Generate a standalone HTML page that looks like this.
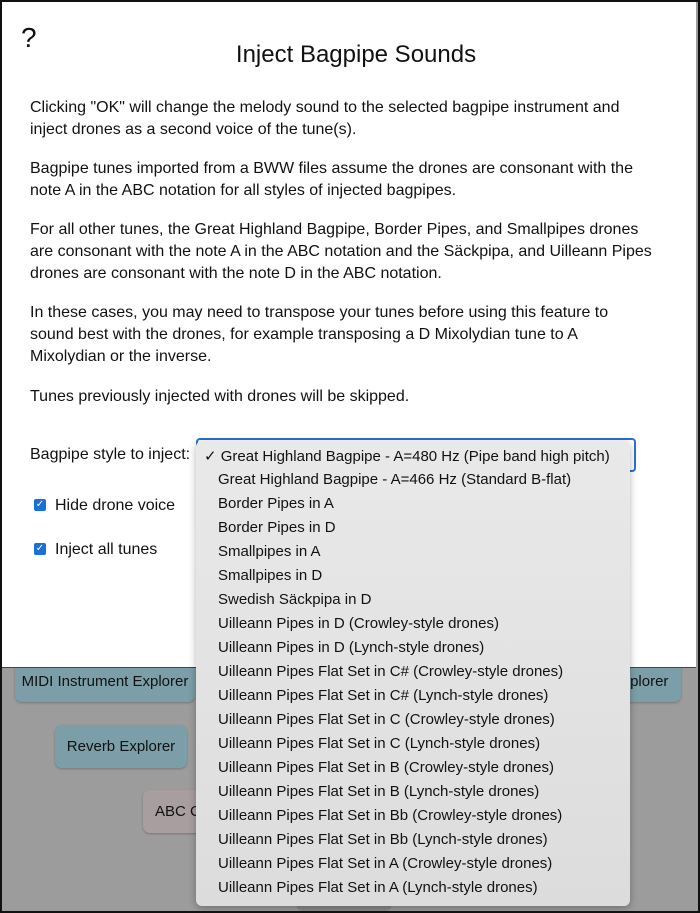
<!DOCTYPE html>
<html style="overflow:hidden"><head><style>
html,body{margin:0;padding:0;width:700px;height:913px;overflow:hidden}
body{position:relative;background:#9c9c9c;font-family:"Liberation Sans",Arial,sans-serif;}
.frame{position:absolute;left:0;top:0;width:696px;height:909px;border:2px solid #111;pointer-events:none;z-index:20}
.btn{position:absolute;border-radius:7px;font-size:15px;color:#111;display:flex;align-items:center;justify-content:center;box-shadow:0 1px 2px rgba(0,0,0,.25)}
.blue{background:#7c9ea9}
.pink{background:#a99e9f}
.dlg{position:absolute;left:0;top:0;width:696px;height:667px;background:#fff;border-bottom:1px solid #444;z-index:5}
.q{position:absolute;left:21px;top:22px;font-size:28px;color:#111}
h1{position:absolute;left:0;width:712px;top:41px;margin:0;text-align:center;font-weight:normal;font-size:24px;color:#111}
p{position:absolute;left:30px;margin:0;font-size:16px;line-height:22px;color:#111;width:680px;white-space:nowrap}
.lbl{position:absolute;font-size:16px;color:#111}
.cb{position:absolute;width:12px;height:12px;background:#1a6fd8;border-radius:2px;color:#fff;font-size:10px;line-height:12px;text-align:center}
.sel{position:absolute;left:196px;top:438px;width:436px;height:30px;border:2px solid #2b6fd6;border-radius:4px;z-index:6}
.dd{position:absolute;left:196px;top:441px;width:434px;height:465px;background:linear-gradient(#e9e9e9,#dcdcdc);border-radius:6px;box-shadow:0 2px 8px rgba(0,0,0,.3);z-index:10}
.dd div{position:absolute;left:22px;font-size:15px;color:#111;white-space:nowrap}
</style></head><body>
<div class="btn blue" style="left:15px;top:650px;width:180px;height:52px;padding-top:10px;box-sizing:border-box">MIDI Instrument Explorer</div>
<div class="btn blue" style="left:600px;top:650px;width:81px;height:52px;padding-top:10px;box-sizing:border-box">Explorer</div>
<div class="btn blue" style="left:55px;top:725px;width:132px;height:43px">Reverb Explorer</div>
<div class="btn pink" style="left:143px;top:790px;width:80px;height:43px;justify-content:flex-start;padding-left:12px;box-sizing:border-box">ABC C</div>
<div class="btn" style="left:296px;top:895px;width:96px;height:16px;background:#8a8a8a;box-shadow:none"></div>
<div class="dlg">
<div class="q">?</div>
<h1>Inject Bagpipe Sounds</h1>
<p style="top:97px">Clicking "OK" will change the melody sound to the selected bagpipe instrument and<br>inject drones as a second voice of the tune(s).</p>
<p style="top:158px">Bagpipe tunes imported from a BWW files assume the drones are consonant with the<br>note A in the ABC notation for all styles of injected bagpipes.</p>
<p style="top:219px">For all other tunes, the Great Highland Bagpipe, Border Pipes, and Smallpipes drones<br>are consonant with the note A in the ABC notation and the Säckpipa, and Uilleann Pipes<br>drones are consonant with the note D in the ABC notation.</p>
<p style="top:302px">In these cases, you may need to transpose your tunes before using this feature to<br>sound best with the drones, for example transposing a D Mixolydian tune to A<br>Mixolydian or the inverse.</p>
<p style="top:386px">Tunes previously injected with drones will be skipped.</p>
<div class="lbl" style="left:30px;top:446px">Bagpipe style to inject:</div>
<div class="cb" style="left:34px;top:499px">✓</div><div class="lbl" style="left:55px;top:497px">Hide drone voice</div>
<div class="cb" style="left:34px;top:543px">✓</div><div class="lbl" style="left:55px;top:541px">Inject all tunes</div>
<div class="sel"></div>
</div>
<div class="dd">
<div style="left:8px;top:6px">✓ Great Highland Bagpipe - A=480 Hz (Pipe band high pitch)</div>
<div style="top:30px">Great Highland Bagpipe - A=466 Hz (Standard B-flat)</div>
<div style="top:54px">Border Pipes in A</div>
<div style="top:78px">Border Pipes in D</div>
<div style="top:102px">Smallpipes in A</div>
<div style="top:126px">Smallpipes in D</div>
<div style="top:150px">Swedish Säckpipa in D</div>
<div style="top:174px">Uilleann Pipes in D (Crowley-style drones)</div>
<div style="top:198px">Uilleann Pipes in D (Lynch-style drones)</div>
<div style="top:222px">Uilleann Pipes Flat Set in C# (Crowley-style drones)</div>
<div style="top:246px">Uilleann Pipes Flat Set in C# (Lynch-style drones)</div>
<div style="top:270px">Uilleann Pipes Flat Set in C (Crowley-style drones)</div>
<div style="top:294px">Uilleann Pipes Flat Set in C (Lynch-style drones)</div>
<div style="top:318px">Uilleann Pipes Flat Set in B (Crowley-style drones)</div>
<div style="top:342px">Uilleann Pipes Flat Set in B (Lynch-style drones)</div>
<div style="top:366px">Uilleann Pipes Flat Set in Bb (Crowley-style drones)</div>
<div style="top:390px">Uilleann Pipes Flat Set in Bb (Lynch-style drones)</div>
<div style="top:414px">Uilleann Pipes Flat Set in A (Crowley-style drones)</div>
<div style="top:438px">Uilleann Pipes Flat Set in A (Lynch-style drones)</div>
</div>
<div class="frame"></div>
</body></html>
